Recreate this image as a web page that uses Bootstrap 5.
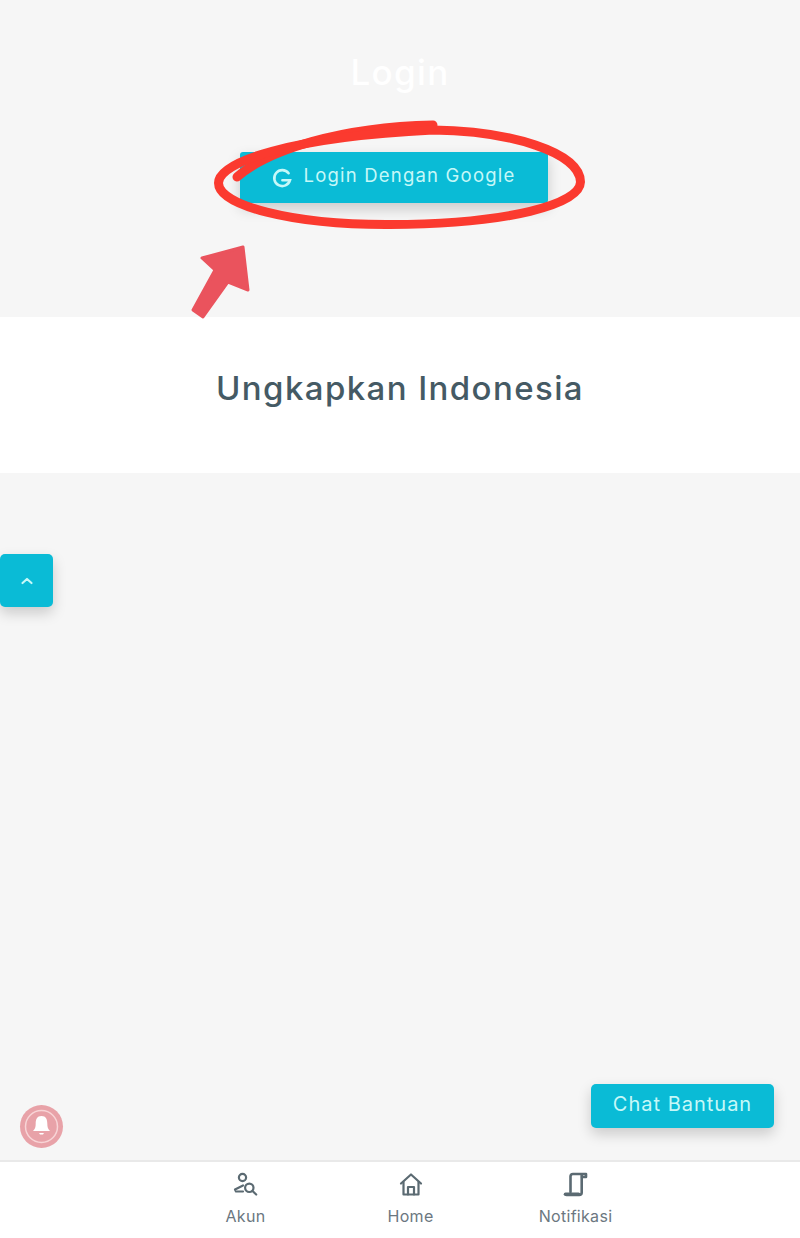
<!DOCTYPE html>
<html lang="en">
<head>
    <meta charset="UTF-8">
    <meta name="viewport" content="width=device-width, initial-scale=1.0">
    <link rel="stylesheet" href="https://cdn.jsdelivr.net/npm/bootstrap@5.3.0/dist/css/bootstrap.min.css">
    <title>Login</title>
    <style>
        body { font-family: Inter, "Liberation Sans", sans-serif; background: #f6f6f6; overflow: hidden; }
        .login-area { height: 317px; padding-top: 49px; }
        .login-title { color: #fff; font-size: 35px; font-weight: 500; line-height: 46px; margin: 0 0 57px; letter-spacing: 1.300px; }
        .btn-teal { background: #0abbd6; color: #c6f8f8; border: 0; border-radius: 3px; box-shadow: 0 6px 14px rgba(0,0,0,.18); }
        .btn-teal:hover { background: #0abbd6; color: #c6f8f8; }
        .btn-google { width: 308px; height: 51px; font-size: 18.5px; gap: 11px; padding: 0 0 3px; margin-right: 12px; letter-spacing: 1.200px; }
        .btn-google svg { margin-top: 5px; margin-left: -2px; }
        .title-area { height: 156px; padding-top: 48px; }
        .site-title { color: #455a64; font-size: 33px; font-weight: 500; line-height: 46px; margin: 0; letter-spacing: 1.400px; }
        .hand-marks { position: absolute; left: 0; top: 0; width: 800px; height: 330px; pointer-events: none; }
        .btn-up { position: absolute; left: 0; top: 554px; width: 53px; height: 53px; padding: 0; border-radius: 5px; }
        .btn-chat { position: absolute; left: 591px; top: 1084px; width: 183px; height: 44px; font-size: 20px; padding: 0 0 4px; letter-spacing: 1px; border-radius: 5px; }
        .bell-wrap { position: absolute; left: 20px; top: 1105px; width: 43px; height: 43px; border-radius: 50%; background: #e8a2a8; }
        .bottom-bar { height: 78px; background: #fff; border-top: 2px solid #e9e9e9; padding-left: 21px; }
        .bar-item { width: 165px; color: #6b777f; font-size: 16px; line-height: 20px; padding-top: 10px; letter-spacing: .3px; }
        .bar-item svg { display: block; margin: 0 auto 8px; }
    </style>
</head>
<body>
<div class="d-flex flex-column vh-100">
    <div class="login-area text-center">
        <h2 class="login-title">Login</h2>
        <button class="btn btn-teal btn-google d-inline-flex align-items-center justify-content-center">
            <svg width="22" height="22" viewBox="0 0 22 22" fill="none" stroke="#c6f8f8" stroke-width="2.600" stroke-linecap="round">
                <path d="M17.600 5.200A8 8 0 1 0 19 12.200H11.400"/>
            </svg>
            <span>Login Dengan Google</span>
        </button>
    </div>
    <div class="title-area bg-white text-center">
        <h1 class="site-title">Ungkapkan Indonesia</h1>
    </div>
    <div class="flex-grow-1"></div>
    <nav class="bottom-bar d-flex justify-content-center text-center">
        <div class="bar-item">
            <svg width="26" height="26" viewBox="0 0 26 26" fill="none" stroke="#5b6a72" stroke-width="2.200" stroke-linecap="round" stroke-linejoin="round">
                <circle cx="9.500" cy="5.500" r="3.600"/>
                <path d="M10 13.500 2 17.500 3 19.500h7"/>
                <circle cx="16.300" cy="15.800" r="4.200"/>
                <path d="m19.500 19 3.700 3.500"/>
            </svg>
            Akun
        </div>
        <div class="bar-item">
            <svg width="26" height="26" viewBox="0 0 26 26" fill="none" stroke="#5b6a72" stroke-width="2.200" stroke-linecap="round" stroke-linejoin="round">
                <path d="M3 11.500 13 2.500l10 9"/>
                <path d="M5.500 10v12.500h15V10"/>
                <path d="M10 22.500V15h6v7.500"/>
            </svg>
            Home
        </div>
        <div class="bar-item">
            <svg width="26" height="26" viewBox="0 0 26 26" fill="none" stroke="#5b6a72" stroke-width="2.600" stroke-linecap="round" stroke-linejoin="round">
                <path d="M7.500 20V4.500a2.500 2.500 0 0 1 2.500-2.500h13v3h-4"/>
                <path d="M18.700 3v17.500a2.500 2.500 0 0 1-2.500 2.500H3.500"/>
                <path d="M2.500 22.200h13" stroke-width="3.600"/>
            </svg>
            Notifikasi
        </div>
    </nav>
</div>

<svg class="hand-marks" viewBox="0 0 800 330" fill="none">
    <path d="M237 177C268 150 340 127 433 125" stroke="#fb3a2f" stroke-width="9" stroke-linecap="round"/>
    <path d="M433 130C510 131 580 152 580.500 182C580 204 510 224 390 224.500C290 225 218.500 205 218.500 183C218.500 162 290 137 433 130Z" stroke="#fb3a2f" stroke-width="9"/>
    <path d="M243 247 202 258 215 270 193 310 203 317 228 282 248 290Z" fill="#ea535d" stroke="#ea535d" stroke-width="3" stroke-linejoin="round"/>
</svg>

<button class="btn btn-teal btn-up d-flex align-items-center justify-content-center" aria-label="Ke atas">
    <svg width="14" height="10" viewBox="0 0 14 10" fill="none" stroke="#c6f8f8" stroke-width="2.200" stroke-linecap="round" stroke-linejoin="round"><path d="m2.500 7 4.500-4 4.500 4"/></svg>
</button>
<button class="btn btn-teal btn-chat">Chat Bantuan</button>
<div class="bell-wrap d-flex align-items-center justify-content-center">
    <svg width="35" height="35" viewBox="0 0 35 35" fill="none">
        <circle cx="17.500" cy="17.500" r="16" stroke="#f8d4d6" stroke-width="1.500"/>
        <path d="M17.500 7c-4.500 0-5.800 3.500-5.800 7.500 0 4-.7 5.500-2.700 7.500h17c-2-2-2.700-3.500-2.700-7.500 0-4-1.300-7.500-5.800-7.500Z" fill="#fff"/>
        <path d="M15 24h5l-1 1.500h-3Z" fill="#fff"/>
    </svg>
</div>
</body>
</html>
